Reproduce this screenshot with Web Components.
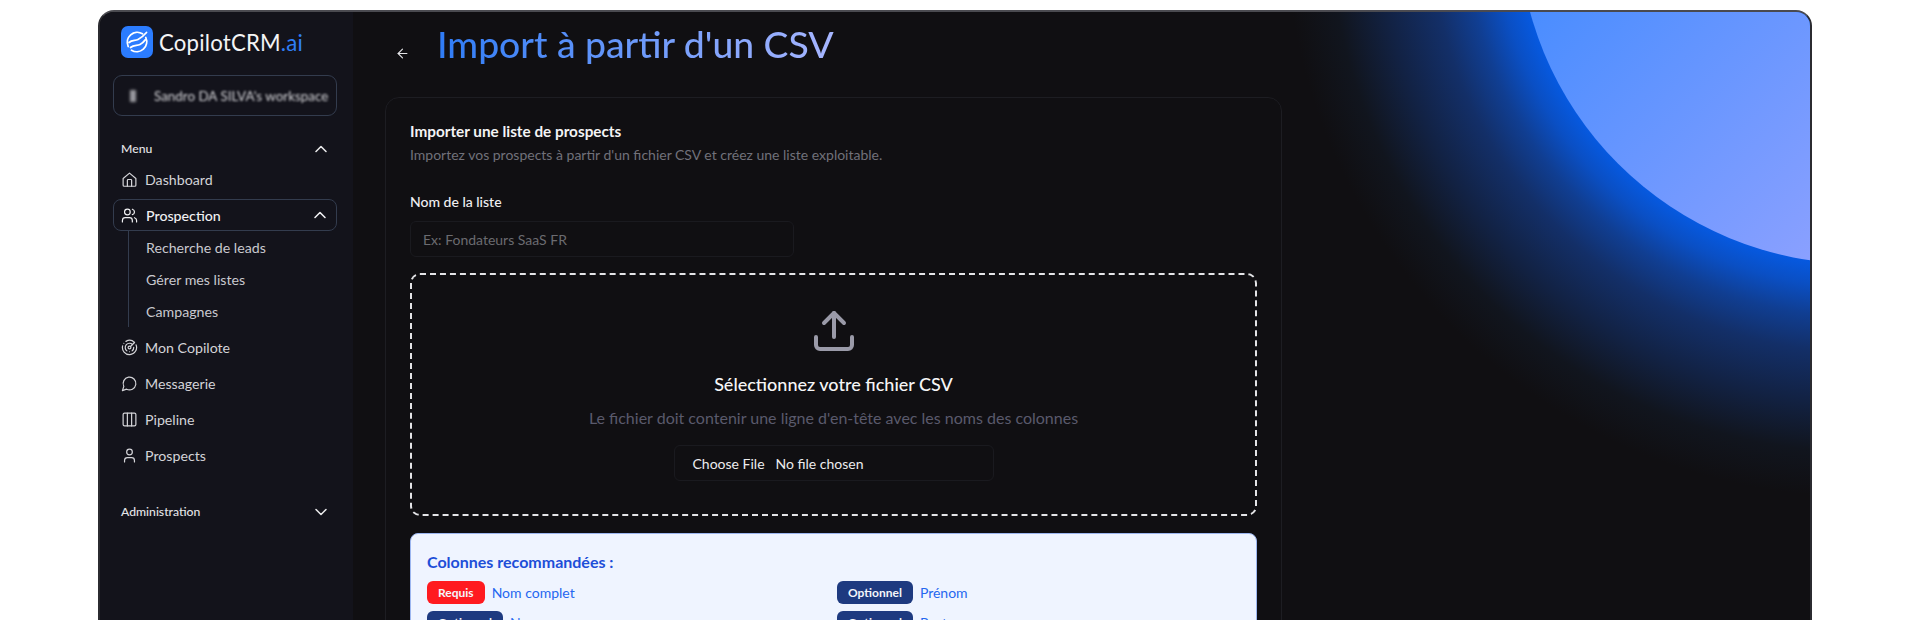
<!DOCTYPE html>
<html lang="fr"><head><meta charset="utf-8"><title>Import CSV</title>
<style>
html,body{margin:0;height:620px;overflow:hidden;background:#fff;font-family:Lato,"Noto Sans",sans-serif}
</style></head><body>
<crm-app>
  <crm-sidebar slot="side"></crm-sidebar>
  <crm-import></crm-import>
</crm-app>
<script>
const I={
 home:'<path d="M3 10.5 12 3l9 7.5V20a1.5 1.5 0 0 1-1.5 1.5h-15A1.5 1.5 0 0 1 3 20z"/><path d="M9 21.5V13a1 1 0 0 1 1-1h4a1 1 0 0 1 1 1v8.500"/>',
 users:'<path d="M16 21v-2a4 4 0 0 0-4-4H6a4 4 0 0 0-4 4v2"/><circle cx="9" cy="7" r="4"/><path d="M22 21v-2a4 4 0 0 0-3-3.870"/><path d="M16 3.130a4 4 0 0 1 0 7.750"/>',
 radar:'<path d="M19.070 4.930A10 10 0 0 0 6.990 3.340"/><path d="M4 6h.01"/><path d="M2.290 9.620A10 10 0 1 0 21.310 8.350"/><path d="M16.240 7.760A6 6 0 1 0 8.230 16.670"/><path d="M12 18h.01"/><path d="M17.990 11.660A6 6 0 0 1 15.770 16.670"/><circle cx="12" cy="12" r="2"/><path d="m13.410 10.590 5.660-5.660"/>',
 chat:'<path d="M7.900 20A9 9 0 1 0 4 16.100L2 22z"/>',
 cols:'<rect x="3" y="3" width="18" height="18" rx="2"/><path d="M9 3v18M15 3v18"/>',
 user:'<circle cx="12" cy="7" r="4"/><path d="M19 21v-2a4 4 0 0 0-4-4H9a4 4 0 0 0-4 4v2"/>',
 up:'<path d="m18 15-6-6-6 6"/>',down:'<path d="m6 9 6 6 6-6"/>',
 back:'<path d="m12 19-7-7 7-7"/><path d="M19 12H5"/>',
 upload:'<path d="M21 15v4a2 2 0 0 1-2 2H5a2 2 0 0 1-2-2v-4"/><path d="m17 8-5-5-5 5"/><path d="M12 3v12"/>'
};
const svg=(n,s,w=2)=>`<svg width="${s}" height="${s}" viewBox="0 0 24 24" fill="none" stroke="currentColor" stroke-width="${w}" stroke-linecap="round" stroke-linejoin="round" aria-hidden="true">${I[n]}</svg>`;
function def(name,html){customElements.define(name,class extends HTMLElement{constructor(){super();this.attachShadow({mode:'open'}).innerHTML=typeof html==='function'?html(this):html}})}

def('crm-app',`<style>
:host{display:block;height:620px;padding-top:10px;box-sizing:border-box;font-family:Lato,"Noto Sans",sans-serif}
.frame{position:relative;margin:0 108px 0 98px;height:640px;box-sizing:border-box;border:2px solid #2b2b30;border-top-color:#4a4a50;border-bottom:0;border-radius:16px 16px 0 0;overflow:hidden;display:flex;
background:radial-gradient(circle 600px at 1760px -90px,#0659e0 342px,#0a4fc4 365px,#103e92 395px,#132f68 430px,#122244 480px,#11151e 530px,#100f12 575px)}
.orb{position:absolute;left:1418px;top:-432px;width:684px;height:684px;border-radius:50%;background:linear-gradient(135deg,#4a8dff 32.5%,#8aa0ff 71%)}
::slotted(crm-sidebar){flex:none}
.rest{flex:1;position:relative;min-width:0}
</style><div class="frame"><div class="orb"></div><slot name="side"></slot><div class="rest"><slot></slot></div></div>`);

def('nav-item',h=>`<style>
:host{display:flex;align-items:center;height:36px;padding-left:21px;gap:7px;color:#d4d4d8;font-size:14.200px}
svg{flex:none}
</style>${svg(h.getAttribute('icon'),17,1.700)}<slot></slot>`);

def('nav-sub',`<style>
:host{display:flex;align-items:center;height:32px;color:#c9c9cf;font-size:14.200px}
</style><slot></slot>`);

def('nav-head',h=>`<style>
:host{display:flex;align-items:center;justify-content:space-between;color:#e4e4e7;font-size:12.200px;font-weight:500;padding:0 22px 0 21px}
svg{color:#e8e8ea}
</style><slot></slot>${svg(h.getAttribute('dir'),20,1.900)}`);

def('crm-sidebar',`<style>
:host{display:block;width:253px;height:100%;background:#13131b;position:relative}
.logo{display:flex;align-items:center;gap:6px;padding:14px 0 0 21px}
.tile{width:32px;height:32px;border-radius:7px;background:#2b7cff;display:flex;align-items:center;justify-content:center}
.brand{font-size:22.200px;color:#f4f4f5;letter-spacing:.2px}
.brand b{font-weight:400;color:#2f7ef5}
.ws{margin:17px 16px 0 13px;height:41px;border:1px solid #333c4e;border-radius:9px;display:flex;align-items:center;padding-left:16px;gap:18px;box-sizing:border-box}
.ws i{display:block;width:6px;height:12px;background:#9a9aa0;filter:blur(1.500px)}
.ws span{font-size:13.400px;color:#d4d4d8;filter:blur(.9px);white-space:nowrap}
.menu{margin-top:22.500px}
.active{margin:2px 16px 0 13px;height:32px;box-sizing:border-box;border:1px solid #333c4e;border-radius:8px;display:flex;align-items:center;padding:0 6px 0 7px;gap:8px;color:#f0f0f2;font-size:14.200px;font-weight:500}
.active span{flex:1}
.subs{margin-left:28px;border-left:1px solid #333c4e;padding-left:17px;height:96px}
.admin{margin-top:28.500px}
</style>
<div class="logo"><div class="tile"><svg width="26" height="26" viewBox="0 0 26 26" fill="none" stroke="#fff" stroke-width="1.800" stroke-linecap="round"><path d="M18.500 4.800A10 10 0 0 0 4.200 17.500"/><path d="M7.500 21.200A10 10 0 0 0 21.800 8.500"/><path d="M5 13.500C8 10.500 11 12 14 10.500S19 7.500 22.500 3.500"/><path d="M6.500 18.500C10 15.500 13 17 16 15.500S20 12.500 21.500 10.500"/></svg></div><div class="brand">CopilotCRM<b>.ai</b></div></div>
<div class="ws"><i></i><span>Sandro DA SILVA's workspace</span></div>
<div class="menu">
<nav-head dir="up">Menu</nav-head>
<nav-item icon="home" style="margin-top:2.500px">Dashboard</nav-item>
<div class="active">${svg('users',17,1.700)}<span>Prospection</span>${svg('up',20,1.900)}</div>
<div class="subs"><nav-sub>Recherche de leads</nav-sub><nav-sub>Gérer mes listes</nav-sub><nav-sub>Campagnes</nav-sub></div>
<nav-item icon="radar" style="margin-top:2px">Mon Copilote</nav-item>
<nav-item icon="chat">Messagerie</nav-item>
<nav-item icon="cols">Pipeline</nav-item>
<nav-item icon="user">Prospects</nav-item>
<nav-head dir="down" class="admin">Administration</nav-head>
</div>`);

def('col-item',h=>`<style>
:host{display:flex;align-items:center;gap:7px;height:23px;font-size:14px;color:#2567f0}
b{height:23px;box-sizing:border-box;padding:0 11px;border-radius:6px;display:flex;align-items:center;font-size:12px;font-weight:700;color:#f4f6fb;background:${h.hasAttribute('req')?'#ff1a1f':'#1e3a80'}}
</style><b>${h.hasAttribute('req')?'Requis':'Optionnel'}</b><slot></slot>`);

def('crm-import',`<style>
:host{display:block;position:relative;padding:0 0 0 32px;color:#fafafa}
.top{display:flex;height:85px;align-items:flex-start}
.back{color:#e4e4e7;margin:34px 0 0 10px;display:flex}
h1{margin:8.500px 0 0 27px;font-size:37.300px;font-weight:500;line-height:46px;background:linear-gradient(90deg,#2f7cf6,#a7b6ff);-webkit-background-clip:text;background-clip:text;color:transparent}
.card{width:897px;box-sizing:border-box;border:1px solid #1d1d22;border-radius:14px;background:#100f12;padding:23px 24px 0;height:560px}
h2{margin:0;font-size:15.300px;font-weight:700;line-height:20px;color:#f4f4f5}
.desc{font-size:14px;color:#71717a;line-height:20px;margin-top:4px}
label{display:block;font-size:14px;font-weight:500;color:#f0f0f2;line-height:20px;margin-top:27px}
.inp{width:384px;height:36px;box-sizing:border-box;border:1px solid #1a1a1f;border-radius:6px;margin-top:9px;display:flex;align-items:center;padding-left:12px;font-size:14px;color:#6b6b70}
.drop{margin-top:16px;height:243px;box-sizing:border-box;border:2px dashed #e4e4e7;border-radius:10px;display:flex;flex-direction:column;align-items:center;background:#100f12}
.up{color:#9a9aa8;margin-top:32px;display:flex}
h3{margin:17px 0 0;font-size:18px;font-weight:500;line-height:24px;color:#f6f6f7}
.hint{font-size:16px;color:#5a5a6c;line-height:24px;margin-top:10px}
.file{width:320px;height:36px;box-sizing:border-box;border:1px solid #1a1a1f;border-radius:6px;margin-top:15px;display:flex;align-items:center;padding-left:18px;font-size:14px;color:#ececee;gap:11px}
.rec{margin-top:17px;width:847px;box-sizing:border-box;border:1px solid #9cb6f0;border-radius:8px;background:#eff4ff;padding:16px 16px 0;height:200px}
h4{margin:0;font-size:16px;font-weight:700;line-height:24px;color:#1d4ed8}
.grid{display:grid;grid-template-columns:410px 1fr;row-gap:7px;margin-top:7px}
</style>
<div class="top"><div class="back">${svg('back',15,1.800)}</div><h1>Import à partir d'un CSV</h1></div>
<div class="card">
<h2>Importer une liste de prospects</h2>
<div class="desc">Importez vos prospects à partir d'un fichier CSV et créez une liste exploitable.</div>
<label>Nom de la liste</label>
<div class="inp">Ex: Fondateurs SaaS FR</div>
<div class="drop">
<div class="up">${svg('upload',48,2)}</div>
<h3>Sélectionnez votre fichier CSV</h3>
<div class="hint">Le fichier doit contenir une ligne d'en-tête avec les noms des colonnes</div>
<div class="file"><span>Choose File</span><span>No file chosen</span></div>
</div>
<div class="rec">
<h4>Colonnes recommandées :</h4>
<div class="grid">
<col-item req>Nom complet</col-item><col-item>Prénom</col-item>
<col-item>Nom</col-item><col-item>Poste</col-item>
</div></div>
</div>`);
</script>
</body></html>
